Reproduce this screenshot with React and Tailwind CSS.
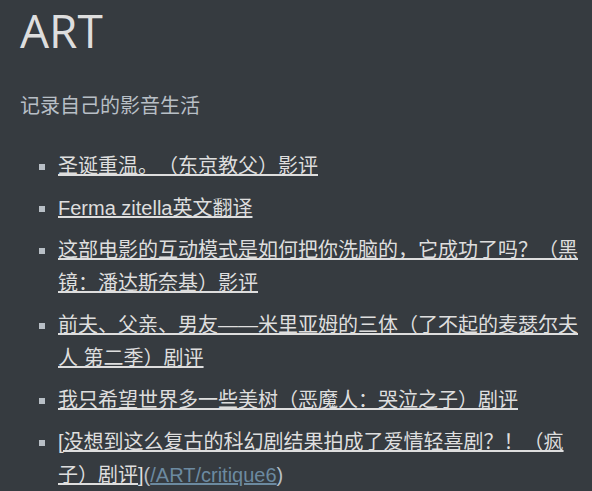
import React from "react";

const items = [
  "圣诞重温。（东京教父）影评",
  "Ferma zitella英文翻译",
  "这部电影的互动模式是如何把你洗脑的，它成功了吗？（黑镜：潘达斯奈基）影评",
  "前夫、父亲、男友——米里亚姆的三体（了不起的麦瑟尔夫人 第二季）剧评",
  "我只希望世界多一些美树（恶魔人：哭泣之子）剧评",
];

const App = () => {
  return (
    <div className="min-h-screen bg-[#363b40] pl-5 pr-3 pt-[3px] font-['Liberation_Sans','Noto_Sans_CJK_SC',sans-serif] text-[20px] leading-[33px] text-[#b8bfc6] [text-spacing-trim:space-all]">
      {/* heading */}
      <h1 className="font-['Open_Sans','Noto_Sans_CJK_SC',sans-serif] text-[46px] font-normal leading-[55px] text-[#dedede]">
        ART
      </h1>
      <p className="mt-[32px]">记录自己的影音生活</p>

      <ul className="mt-[27px] list-[square] pl-[38px] marker:text-[#b8bfc6]">
        {items.map((t) => (
          <li key={t} className="mb-[9px]">
            <a href="#" className="text-[#dedede] underline">
              {t}
            </a>
          </li>
        ))}
        <li className="mb-[9px]">
          <a href="#" className="text-[#dedede] underline">
            [没想到这么复古的科幻剧结果拍成了爱情轻喜剧？！（疯子）剧评]
          </a>
          (
          <a href="#" className="text-[#6c8aa0] underline">
            /ART/critique6
          </a>
          )
        </li>
      </ul>
    </div>
  );
};

export default App;
